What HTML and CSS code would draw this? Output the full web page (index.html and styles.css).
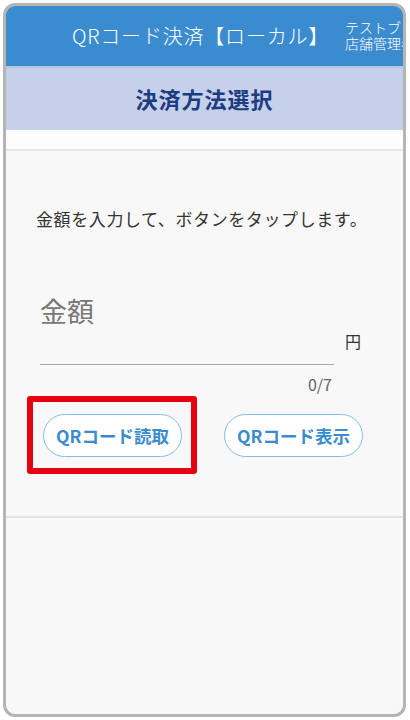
FILE: index.html
```html
<!DOCTYPE html>
<html lang="ja">
<head>
  <meta charset="UTF-8">
  <title>決済方法選択</title>
  <link rel="stylesheet" href="styles.css">
</head>
<body>
  <div class="phone">
    <div class="app-header">
      <div class="app-title">QRコード決済【ローカル】</div>
      <div class="user-info">
        <div>テストブランド</div>
        <div>店舗管理者</div>
      </div>
    </div>

    <div class="page-title">決済方法選択</div>
    <div class="spacer-strip"></div>

    <div class="content">
      <p class="guide">金額を入力して、ボタンをタップします。</p>

      <div class="amount-row">
        <div class="amount-field">
          <div class="amount-label">金額</div>
          <div class="amount-line"></div>
          <div class="counter">0/7</div>
        </div>
        <span class="unit">円</span>
      </div>

      <div class="btn-row">
        <div class="highlight">
          <button class="qr-btn">QRコード読取</button>
        </div>
        <button class="qr-btn">QRコード表示</button>
      </div>
    </div>

    <div class="divider"></div>
  </div>
</body>
</html>
```

FILE: styles.css
```css
body {
  margin: 0;
  background: #fff;
  font-family: "Noto Sans CJK JP", "Noto Sans", sans-serif;
}
.phone {
  margin: 3px 0 0 3px;
  width: 397px;
  height: 708px;
  border: 3px solid #b5b5b5;
  border-radius: 12px;
  overflow: hidden;
  background: #f8f8f8;
}
.app-header {
  height: 60px;
  background: #3b8ccf;
  color: #fff;
  display: flex;
  align-items: center;
  white-space: nowrap;
  overflow: hidden;
}
.app-title {
  margin-left: 66px;
  font-size: 20px;
  letter-spacing: 0.8px;
  font-weight: 300;
  line-height: 1;
  flex: none;
}
.user-info {
  margin-left: 16px;
  margin-top: -2px;
  font-size: 14px;
  line-height: 16px;
  font-weight: 300;
  flex: none;
}
.page-title {
  height: 64px;
  background: #c5d0ea;
  color: #1d3c82;
  font-size: 22px;
  letter-spacing: 1px;
  font-weight: bold;
  display: flex;
  align-items: center;
  justify-content: center;
  box-shadow: inset 0 2px 2px rgba(0, 0, 0, 0.06);
}
.spacer-strip {
  height: 19px;
  background: #fdfdfd;
  border-bottom: 2px solid #e6e6e6;
}
.content {
  padding: 56px 0 0 30px;
}
.guide {
  margin: 0;
  font-size: 17px;
  letter-spacing: 0.6px;
  line-height: 24px;
  color: #333;
}
.amount-row {
  display: flex;
  align-items: flex-start;
  margin-top: 63px;
}
.amount-field {
  width: 294px;
  margin-left: 4px;
}
.amount-label {
  font-size: 27px;
  line-height: 34px;
  color: #777;
}
.amount-line {
  height: 1px;
  background: #aaa;
  margin-top: 36px;
}
.counter {
  text-align: right;
  font-size: 16px;
  line-height: 20px;
  color: #666;
  margin-top: 9px;
  margin-right: 2px;
}
.unit {
  margin-left: 11px;
  margin-top: 35px;
  font-size: 16px;
  color: #333;
}
.btn-row {
  display: flex;
  align-items: center;
  margin-top: 2px;
  margin-left: -9px;
}
.highlight {
  border: 6px solid #e60012;
  border-radius: 3px;
  padding: 12px 9px 11px 10px;
}
.qr-btn {
  width: 139px;
  height: 43px;
  border: 1.5px solid #82bde8;
  border-radius: 22px;
  background: #fff;
  color: #3b8ccf;
  font-family: "Noto Sans CJK JP", sans-serif;
  font-size: 17.5px;
  font-weight: bold;
  padding: 0;
}
.btn-row > .qr-btn {
  margin-left: 27px;
}
.divider {
  margin-top: 42px;
  height: 2px;
  background: #e3e3e3;
}
```
